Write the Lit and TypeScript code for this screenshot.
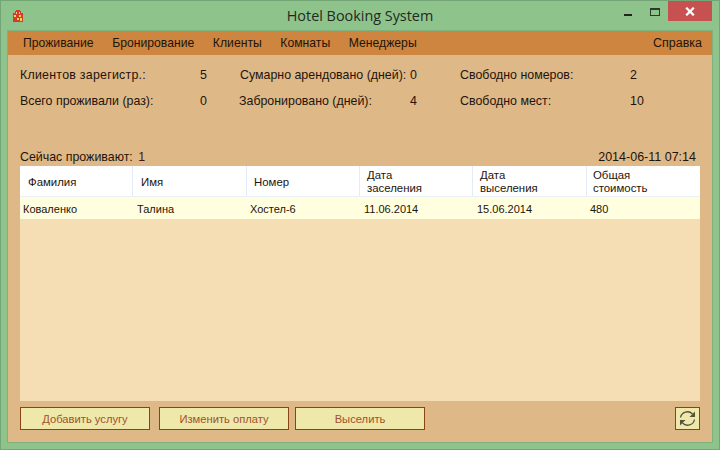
import { LitElement, html, css, svg } from "lit";
import { customElement } from "lit/decorators.js";

const icon = svg`<svg class="logo" width="10" height="12" viewBox="0 0 10 12" shape-rendering="crispEdges">
<path d="M3 0h4v1h1v2h2v9H0V3h2V1h1z" fill="#d23a32"/>
<g fill="#f3d34a"><rect x="3" y="2" width="1" height="2"/><rect x="6" y="2" width="1" height="2"/><rect x="1" y="5" width="2" height="2"/><rect x="6" y="5" width="2" height="2"/><rect x="4" y="8" width="2" height="2"/><rect x="7" y="8" width="2" height="3"/></g></svg>`;

const cols = [
  ["Фамилия"], ["Имя"], ["Номер"], ["Дата", "заселения"], ["Дата", "выселения"], ["Общая", "стоимость"],
];
const row = ["Коваленко", "Талина", "Хостел-6", "11.06.2014", "15.06.2014", "480"];

@customElement("app-root")
export class AppRoot extends LitElement {
  static styles = css`
    :host { display: block; width: 720px; height: 450px; overflow: hidden; font-family: "Liberation Sans", Arial, sans-serif; font-size: 12.4px; color: #1e140a; }
    * { box-sizing: border-box; }
    .win { width: 720px; height: 450px; background: #8fc38c; border: 1px solid #74a577; display: flex; flex-direction: column; padding: 0 6px 6px; }
    .title { height: 29px; display: grid; grid-template-columns: 1fr auto 1fr; align-items: center; flex: none; }
    .logo { margin: 0 0 0 6px; display: block; }
    .title h1 { margin: 0; font: 400 14.4px "Open Sans", sans-serif; color: #1f2a1f; }
    .ctrl { display: flex; justify-self: end; align-items: flex-start; align-self: start; height: 20px; margin-right: 1px; }
    .ctrl span { display: flex; align-items: center; justify-content: center; height: 20px; }
    .min { width: 27px; }
    .min i { display: block; width: 8px; height: 2px; background: #222; margin-top: 8px; }
    .max { width: 27px; }
    .max i { display: block; width: 10px; height: 8px; border: 1px solid #2a3a2e; border-top-width: 2px; margin-top: 2px; }
    .close { width: 44px; background: #c75050; }
    .client { flex: 1; background: #deb887; border: 1px solid #7fb07e; display: flex; flex-direction: column; min-height: 0; }
    .menu { height: 24px; background: #cd853f; display: flex; align-items: center; padding: 0 10px 0 15px; flex: none; font-size: 12.2px; }
    .menu span { margin-right: 18.6px; }
    .menu span:last-child { margin: 0 0 0 auto; font-size: 12.5px; }
    .stats { display: grid; grid-template-columns: 180px 40px 170px 50px 170px 1fr; grid-auto-rows: 26px; align-items: center; padding: 7px 0 0 12px; height: 95px; flex: none; }
    .wide { letter-spacing: 0.25px; }
    .s2 { margin-left: -1px; }
    .info { display: flex; justify-content: space-between; padding: 0 16px 0 12px; height: 16px; line-height: 15px; flex: none; }
    .info b { font-weight: 400; margin-left: 2px; color: #4a1212; }
    .date { font-size: 12.5px; }
    .table { margin: 0 12px; width: 680px; height: 235px; background: #f5deb3; flex: none; display: flex; flex-direction: column; font-size: 11px; }
    .head { height: 31px; background: #fff; display: grid; grid-template-columns: 113px 114px 113px 113px 114px 1fr; border-bottom: 1px solid #eaf0f8; flex: none; font-size: 11.4px; }
    .head div { border-right: 1px solid #e3ebf6; padding: 2px 0 0 7px; display: flex; flex-direction: column; justify-content: center; line-height: 13px; }
    .head div:first-child, .head div:nth-child(2) { padding-left: 8px; }
    .head div:last-child { border-right: 0; padding-left: 6px; }
    .row { height: 22px; background: #ffffe0; display: grid; grid-template-columns: 113px 114px 113px 113px 114px 1fr; align-items: center; flex: none; padding-top: 2px; }
    .row div { padding-left: 3px; }
    .row div:nth-child(2), .row div:nth-child(4), .row div:nth-child(5) { padding-left: 4px; }
    .actions { display: flex; padding: 6px 12px 0; flex: none; }
    button { font: inherit; font-size: 11.2px; height: 23px; background: #eee8aa; border: 1px solid #8b4513; color: #a0522d; padding: 0; width: 130px; border-radius: 0; }
    .b2 { margin-left: 9px; }
    .b3 { margin-left: 6px; }
    .refresh { margin-left: auto; width: 25px; display: flex; align-items: center; justify-content: center; }
  `;

  render() {
    return html`<div class="win">
      <div class="title">
        ${icon}
        <h1>Hotel Booking System</h1>
        <div class="ctrl">
          <span class="min"><i></i></span>
          <span class="max"><i></i></span>
          <span class="close"><svg width="10" height="9" viewBox="0 0 10 9"><path d="M1.200 .7l7.600 7.600M8.800 .7l-7.600 7.600" stroke="#fff" stroke-width="2.200"/></svg></span>
        </div>
      </div>
      <div class="client">
        <div class="menu">
          <span>Проживание</span><span>Бронирование</span><span>Клиенты</span><span>Комнаты</span><span>Менеджеры</span><span>Справка</span>
        </div>
        <div class="stats">
          <span class="wide">Клиентов зарегистр.:</span><span>5</span><span>Сумарно арендовано (дней):</span><span>0</span><span>Свободно номеров:</span><span>2</span>
          <span>Всего проживали (раз):</span><span>0</span><span class="s2">Забронировано (дней):</span><span>4</span><span>Свободно мест:</span><span>10</span>
        </div>
        <div class="info"><span>Сейчас проживают: <b>1</b></span><span class="date">2014-06-11 07:14</span></div>
        <div class="table">
          <div class="head">${cols.map((c) => html`<div>${c.map((l) => html`<span>${l}</span>`)}</div>`)}</div>
          <div class="row">${row.map((c) => html`<div>${c}</div>`)}</div>
        </div>
        <div class="actions">
          <button>Добавить услугу</button>
          <button class="b2">Изменить оплату</button>
          <button class="b3">Выселить</button>
          <button class="refresh"><svg width="19" height="19" viewBox="0 0 19 19" fill="none" stroke="#55523f" stroke-width="1.300"><path d="M2.500 8.500A7 7 0 0 1 14.500 5"/><path d="M16.500 10.500A7 7 0 0 1 4.500 14"/><path d="M17 2.500v5.500h-5.500z" fill="#55523f" stroke="none"/><path d="M2 16.500v-5.500h5.500z" fill="#55523f" stroke="none"/></svg></button>
        </div>
      </div>
    </div>`;
  }
}
